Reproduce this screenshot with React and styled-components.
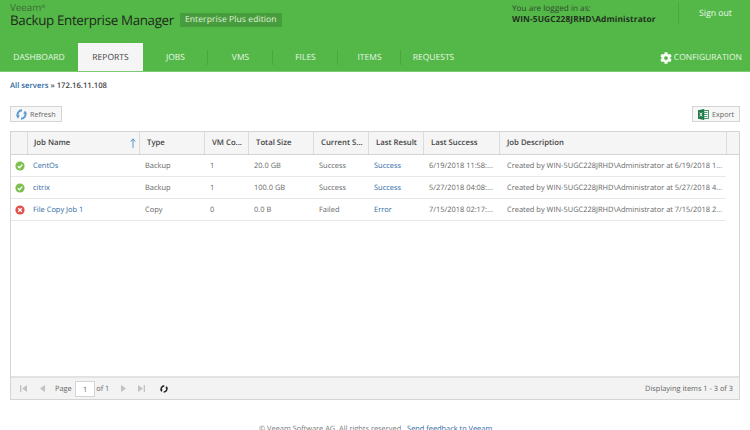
import React from "react";
import styled, { createGlobalStyle } from "styled-components";
import { FaCog } from "react-icons/fa";

const Global = createGlobalStyle`
  html, body { margin: 0; padding: 0; background: #fff; }
  body { width: 750px; height: 430px; overflow: hidden; font-family: "Open Sans", "Noto Sans", sans-serif; font-size: 8px; color: #555; text-rendering: geometricPrecision; }
  * { box-sizing: border-box; }
`;

const COLS = "16px 112px 65px 44px 65px 55px 55px 76px 227px 1fr";

const Page = styled.div`
  width: 750px; height: 430px; display: flex; flex-direction: column; overflow: hidden;
`;
const Header = styled.header`
  height: 72px; flex: none; background: #54b848; border-bottom: 1px solid #7ccb72;
  display: flex; flex-direction: column; justify-content: space-between;
`;
const TopRow = styled.div`
  display: flex; justify-content: space-between; height: 43px; padding-left: 10px;
`;
const Brand = styled.div`
  display: flex; flex-direction: column; padding-top: 2px;
`;
const Vendor = styled.div`
  font-size: 9.8px; line-height: 11px; color: #3d6b38;
  sup { font-size: 5px; line-height: 0; vertical-align: 3px; }
`;
const BrandRow = styled.div`
  display: flex; align-items: center; gap: 6px;
`;
const Product = styled.div`
  font-size: 13.4px; line-height: 14px; letter-spacing: -0.35px; color: #1e2a1b; white-space: nowrap;
`;
const Edition = styled.div`
  background: #479c3d; color: #e0f3dc; font-size: 8.5px; line-height: 14px; height: 14px;
  padding: 0 5px; letter-spacing: 0.1px; white-space: nowrap;
`;
const UserArea = styled.div`display: flex; align-items: flex-start;`;
const Login = styled.div`
  width: 166px; padding-top: 3px; font-size: 8.2px; line-height: 11px; color: #2f4a2b;
`;
const LoginName = styled.div`
  font-weight: 700; font-size: 8.4px; color: #22301f; line-height: 12px; letter-spacing: 0.1px; white-space: nowrap;
`;
const SignOut = styled.a`
  width: 72px; height: 23px; margin-top: 2px; border-left: 1px solid #4aa63f; color: #eaf7e8;
  font-size: 8.7px; line-height: 22px; padding-left: 20px; white-space: nowrap;
`;
const NavRow = styled.nav`
  display: flex; justify-content: space-between; align-items: flex-end; height: 28px;
`;
const Tabs = styled.div`display: flex; align-items: flex-end;`;
const Tab = styled.a`
  width: ${p => p.$w}px; height: 28px; display: flex; align-items: center; justify-content: center;
  font-size: 8.5px; padding-top: 1px; white-space: nowrap;
  color: ${p => (p.$active ? "#444" : "#e6f6e3")};
  background: ${p => (p.$active ? "#f5f5f5" : "transparent")};
  position: relative;
  ${p => p.$sep && `&::after { content: ""; position: absolute; right: 0; top: 7px; height: 15px; width: 1px; background: #4aa63f; }`}
`;
const Config = styled.a`
  display: flex; align-items: center; gap: 2px; height: 28px; padding-right: 8px; padding-top: 1px;
  color: #e6f6e3; font-size: 8.5px; white-space: nowrap;
  svg { color: #f6fbf5; }
`;
const Main = styled.main`
  flex: 1; padding: 0 10px; display: flex; flex-direction: column; min-height: 0;
`;
const Crumbs = styled.div`
  margin-top: 8px; font-size: 7.7px; line-height: 12px; font-weight: 600; color: #444;
  a { color: #2d6aa3; }
`;
const Toolbar = styled.div`
  margin-top: 14px; height: 16px; display: flex; justify-content: space-between;
`;
const Button = styled.button`
  height: 16px; width: ${p => p.$w}px; background: #f7f7f7; border: 1px solid #d4d4d4; padding: 0 0 0 5px;
  display: flex; align-items: center; gap: 3px; font: 7.2px "Open Sans", sans-serif; color: #666;
`;
const Grid = styled.section`
  margin-top: 9px; height: 269px; border: 1px solid #d4d4d4; display: flex; flex-direction: column; background: #fff;
`;
const HeadRow = styled.div`
  display: grid; grid-template-columns: ${COLS}; height: 23px; flex: none; background: #f5f5f5; border-bottom: 1px solid #d4d4d4;
`;
const HeadCell = styled.div`
  display: flex; align-items: center; justify-content: space-between; padding: 0 3px 0 ${p => p.$pad || 6}px;
  font-weight: 600; font-size: 7.75px; color: #444; border-left: ${p => (p.$first ? "0" : "1px solid #dcdcdc")}; white-space: nowrap; overflow: hidden;
`;
const SortArrow = styled.svg`width: 6px; height: 10px; flex: none;`;
const Body = styled.div`flex: 1; min-height: 0;`;
const Row = styled.div`
  display: grid; grid-template-columns: ${COLS}; height: 22px; width: 715px; border-bottom: 1px solid #e8e8e8;
`;
const Cell = styled.div`
  display: flex; align-items: center; padding-left: ${p => p.$pad || 6}px; white-space: nowrap; overflow: hidden;
  color: ${p => (p.$link ? "#2d6aa3" : "#666")}; font-size: 7.45px;
`;
const IconCell = styled.div`display: flex; align-items: center; justify-content: center; padding-left: 2px;`;
const Pager = styled.div`
  height: 23px; flex: none; background: #f3f3f3; border-top: 2px solid #e2e2e2; display: flex; align-items: center; justify-content: space-between;
  padding: 0 6px 0 8px; font-size: 7.4px; color: #666;
`;
const PagerLeft = styled.div`display: flex; align-items: center;`;
const NavIcon = styled.svg`width: 9px; height: 9px; fill: #c2c2c2; margin: 0 ${p => p.$mr}px 0 ${p => p.$ml || 0}px; flex: none;`;
const PageInput = styled.div`
  width: 20px; height: 16px; margin: 0 1px 0 3.5px; background: #fff; border: 1px solid #d4d4d4; text-align: center; line-height: 16px; font-size: 7.4px;
`;
const Footer = styled.footer`
  height: 30px; padding: 24px 0 0 259px; font-size: 7.4px; line-height: 10px; color: #777; white-space: nowrap; flex: none;
  a { color: #2d6aa3; margin-left: 4px; }
`;

const Status = ({ ok }) => (
  <svg width="10" height="10" viewBox="0 0 10 10">
    <circle cx="5" cy="5" r="4.6" fill={ok ? "#7ec050" : "#e2504c"} />
    {ok ? (
      <path d="M2.8 5.1 4.4 6.7 7.3 3.6" fill="none" stroke="#fff" strokeWidth="1.3" />
    ) : (
      <path d="M3.2 3.2 6.8 6.8M6.8 3.2 3.2 6.8" fill="none" stroke="#fff" strokeWidth="1.4" />
    )}
  </svg>
);
const Reload = ({ c, size }) => (
  <svg width={size} height={size} viewBox="0 0 12 12">
    <path d="M6.5 1.5A4.5 4.5 0 0 0 2 7.5" fill="none" stroke={c} strokeWidth="2.2" />
    <path d="M0 6.6 4.2 7 2 10.5z" fill={c} />
    <path d="M5.5 10.5A4.5 4.5 0 0 0 10 4.5" fill="none" stroke={c} strokeWidth="2.2" />
    <path d="M12 5.4 7.8 5 10 1.5z" fill={c} />
  </svg>
);
const Excel = () => (
  <svg width="11" height="11" viewBox="0 0 11 11">
    <rect x="5" y="1.5" width="5.5" height="8" fill="#fff" stroke="#1f7a45" strokeWidth="0.8" />
    <path d="M6 3.4h3.5M6 5.5h3.5M6 7.6h3.5" stroke="#1f7a45" strokeWidth="0.8" />
    <path d="M0 1.2 6.2 0v11L0 9.8z" fill="#1f7a45" />
    <path d="M1.7 3.6 4.2 7.4M4.2 3.6 1.7 7.4" stroke="#fff" strokeWidth="0.9" />
  </svg>
);

const rows = [
  { ok: true, name: "CentOs", type: "Backup", vm: "1", size: "20.0 GB", cur: "Success", res: "Success", last: "6/19/2018 11:58:...", desc: "Created by WIN-5UGC228JRHD\\Administrator at 6/19/2018 1..." },
  { ok: true, name: "citrix", type: "Backup", vm: "1", size: "100.0 GB", cur: "Success", res: "Success", last: "5/27/2018 04:08:...", desc: "Created by WIN-5UGC228JRHD\\Administrator at 5/27/2018 4..." },
  { ok: false, name: "File Copy Job 1", type: "Copy", vm: "0", size: "0.0 B", cur: "Failed", res: "Error", last: "7/15/2018 02:17:...", desc: "Created by WIN-5UGC228JRHD\\Administrator at 7/15/2018 2..." },
];
const heads = ["Type", "VM Co...", "Total Size", "Current S...", "Last Result", "Last Success", "Job Description"];
const tabs = [["DASHBOARD", 78], ["REPORTS", 65], ["JOBS", 65], ["VMS", 65], ["FILES", 65], ["ITEMS", 63], ["REQUESTS", 65]];

export default function App() {
  return (
    <Page>
      <Global />
      <Header>
        <TopRow>
          <Brand>
            <Vendor>Veeam<sup>®</sup></Vendor>
            <BrandRow>
              <Product>Backup Enterprise Manager</Product>
              <Edition>Enterprise Plus edition</Edition>
            </BrandRow>
          </Brand>
          <UserArea>
            <Login>
              You are logged in as:
              <LoginName>WIN-5UGC228JRHD\Administrator</LoginName>
            </Login>
            <SignOut>Sign out</SignOut>
          </UserArea>
        </TopRow>
        <NavRow>
          <Tabs>
            {tabs.map(([t, w], i) => (
              <Tab key={t} $w={w} $active={t === "REPORTS"} $sep={i >= 2 && i <= 5}>{t}</Tab>
            ))}
          </Tabs>
          <Config><FaCog size={12} />CONFIGURATION</Config>
        </NavRow>
      </Header>
      <Main>
        <Crumbs><a>All servers</a> » 172.16.11.108</Crumbs>
        <Toolbar>
          <Button $w={52}><Reload c="#5a9bd8" size={11} />Refresh</Button>
          <Button $w={48}><Excel />Export</Button>
        </Toolbar>
        <Grid>
          <HeadRow>
            <HeadCell $first />
            <HeadCell>
              Job Name
              <SortArrow viewBox="0 0 6 10"><path d="M3 10V2M.8 3.6 3 .8l2.2 2.8" fill="none" stroke="#2d7bc4" strokeWidth="0.8" /></SortArrow>
            </HeadCell>
            {heads.map(h => <HeadCell key={h} $pad={7}>{h}</HeadCell>)}
            <HeadCell />
          </HeadRow>
          <Body>
            {rows.map(r => (
              <Row key={r.name}>
                <IconCell><Status ok={r.ok} /></IconCell>
                <Cell $link>{r.name}</Cell>
                <Cell>{r.type}</Cell>
                <Cell>{r.vm}</Cell>
                <Cell>{r.size}</Cell>
                <Cell>{r.cur}</Cell>
                <Cell $link>{r.res}</Cell>
                <Cell>{r.last}</Cell>
                <Cell $pad={8}>{r.desc}</Cell>
              </Row>
            ))}
          </Body>
          <Pager>
            <PagerLeft>
              <NavIcon $mr={10} viewBox="0 0 9 9"><path d="M1 1h1.3v7H1zM8 1v7L3 4.5z" /></NavIcon>
              <NavIcon $mr={8} viewBox="0 0 9 9"><path d="M7 1v7L2 4.5z" /></NavIcon>
              Page
              <PageInput>1</PageInput>
              of 1
              <NavIcon $ml={10} $mr={9} viewBox="0 0 9 9"><path d="M2 1v7l5-3.5z" /></NavIcon>
              <NavIcon $mr={14} viewBox="0 0 9 9"><path d="M1 1v7l5-3.5zM6.7 1H8v7H6.7z" /></NavIcon>
              <Reload c="#222" size={8} />
            </PagerLeft>
            Displaying items 1 - 3 of 3
          </Pager>
        </Grid>
      </Main>
      <Footer>© Veeam Software AG. All rights reserved.<a>Send feedback to Veeam</a></Footer>
    </Page>
  );
}
